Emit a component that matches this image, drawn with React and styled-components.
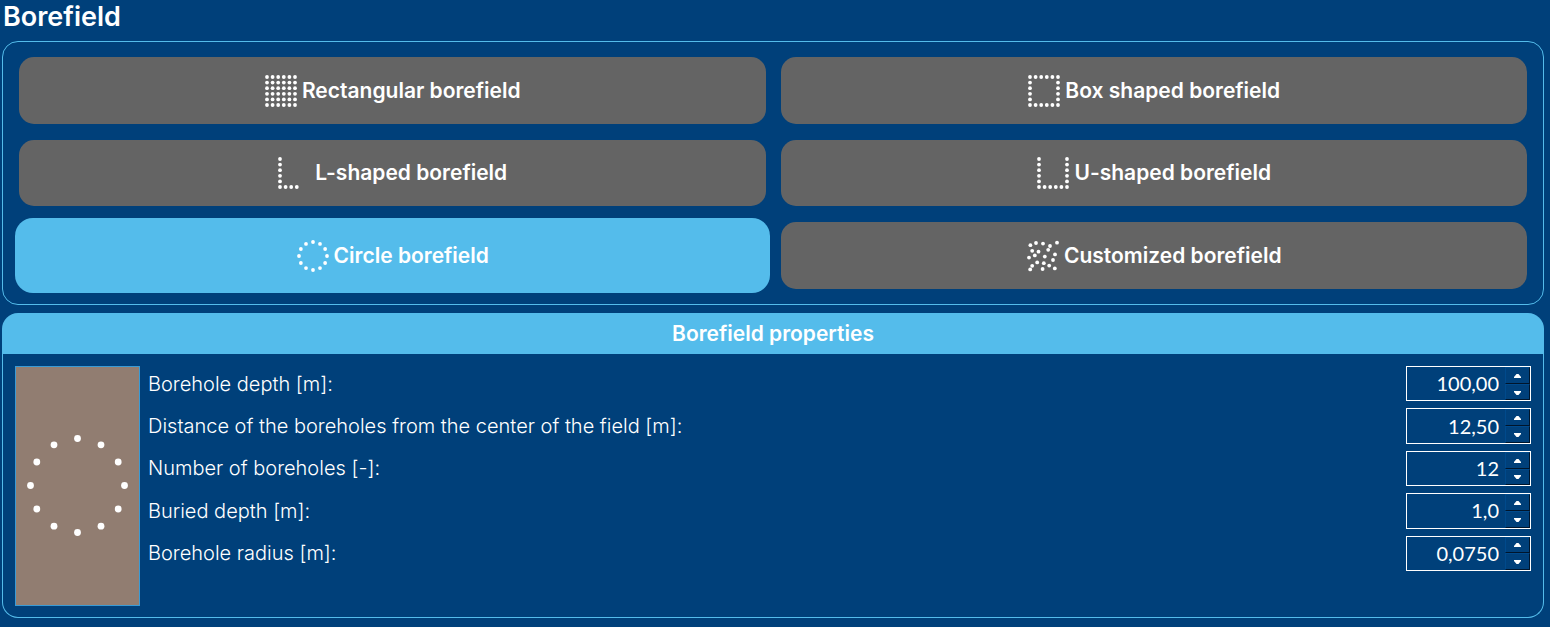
import React, { useState } from "react";
import styled, { createGlobalStyle } from "styled-components";

const colors = {
  background: "#00407a",
  accent: "#54bceb",
  button: "#646464",
  ground: "#917d71",
  shadow: "#00152b",
};

const GlobalStyle = createGlobalStyle`
  *, *::before, *::after { box-sizing: border-box; }
  body {
    margin: 0;
    background: ${colors.background};
    color: #fff;
    font-family: Inter, "Open Sans", sans-serif;
    font-size: 20px;
    font-weight: 350;
    line-height: 24px;
    font-variant-ligatures: none;
  }
  button, input { font: inherit; color: inherit; }
`;

const Page = styled.main`
  padding: 0 6px 9px 2px;
`;

const Title = styled.h1`
  margin: 0;
  padding: 1px 0 8px 1px;
  font-size: 27px;
  line-height: 32px;
  font-weight: 600;
`;

const ShapeFrame = styled.section`
  padding: 11px 12px;
  border: 1px solid ${colors.accent};
  border-radius: 16px;
`;

const ShapeGrid = styled.div`
  display: grid;
  grid-template-columns: 1fr 1fr;
  grid-auto-rows: 1fr;
  gap: 8px 7px;
  min-height: 240px;
`;

const ShapeButton = styled.button`
  display: flex;
  align-items: center;
  justify-content: center;
  gap: 4px;
  margin: ${(p) => (p.$active ? "0" : "4px")};
  padding: 1px 0 0;
  border: 0;
  border-radius: ${(p) => (p.$active ? "18px" : "15px")};
  background: ${(p) => (p.$active ? colors.accent : colors.button)};
  font-size: 21px;
  font-weight: 600;
  cursor: pointer;
`;

const Properties = styled.section`
  margin-top: 8px;
`;

const PropertiesTitle = styled.h2`
  margin: 0;
  padding: 9px 0 8px;
  border-radius: 16px 16px 0 0;
  background: ${colors.accent};
  font-size: 21px;
  line-height: 24px;
  font-weight: 600;
  text-align: center;
`;

const PropertiesBody = styled.div`
  display: flex;
  align-items: flex-start;
  gap: 8px;
  padding: 12px 12px 11px;
  border: 1px solid ${colors.accent};
  border-top: 0;
  border-radius: 0 0 16px 16px;
`;

const Preview = styled.svg`
  flex: none;
  width: 125px;
  height: 240px;
  border: 1px solid #3a9bd5;
  background: ${colors.ground};
`;

const Fields = styled.div`
  flex: 1;
  display: grid;
  grid-auto-rows: 1fr;
  gap: 7px;
  min-height: 205px;
`;

const Field = styled.div`
  display: flex;
  align-items: stretch;
  justify-content: space-between;
`;

const FieldLabel = styled.label`
  align-self: center;
`;

const SpinBox = styled.div`
  display: flex;
  width: 125px;
  border: 1px solid #fff;
`;

const SpinInput = styled.input`
  flex: 1;
  min-width: 0;
  padding: 0 6px 1px 0;
  border: 0;
  outline: 0;
  background: transparent;
  font-family: Lato, sans-serif;
  font-weight: 400;
  text-align: right;
`;

const SpinButtons = styled.div`
  display: flex;
  flex-direction: column;
  width: 25px;
`;

const SpinButton = styled.button`
  flex: 1;
  display: flex;
  align-items: center;
  justify-content: center;
  min-height: 0;
  padding: 1px 0 0;
  border: 1px solid ${colors.shadow};
  border-top-color: #004a8c;
  border-left-color: #004a8c;
  background: ${colors.background};
`;

const line = [0, 1, 2, 3, 4, 5];
const step = (i) => 3 + i * 5.6;

const grid = (keep) =>
  line.flatMap((row) =>
    line.filter((col) => keep(col, row)).map((col) => [step(col), step(row)])
  );

const ring = (cx, cy, radius, count) =>
  Array.from({ length: count }, (_, i) => {
    const angle = (i * 2 * Math.PI) / count;
    return [cx + radius * Math.cos(angle), cy + radius * Math.sin(angle)];
  });

const shapes = [
  { id: "rectangular", label: "Rectangular borefield", dots: grid(() => true) },
  {
    id: "box",
    label: "Box shaped borefield",
    dots: grid((c, r) => c === 0 || c === 5 || r === 0 || r === 5),
  },
  {
    id: "l",
    label: "L-shaped borefield",
    dots: grid((c, r) => c === 0 || (r === 5 && c < 4)),
  },
  {
    id: "u",
    label: "U-shaped borefield",
    dots: grid((c, r) => c === 0 || c === 5 || r === 5),
  },
  { id: "circle", label: "Circle borefield", dots: ring(17, 17, 14, 12) },
  {
    id: "custom",
    label: "Customized borefield",
    dots: [
      [4.4, 6.2], [10, 4], [17, 4.6], [24, 7], [31, 3.7],
      [6.2, 11.8], [12.5, 12.7], [22.2, 10.8], [8.8, 16.4], [3, 18.6],
      [18.8, 17.6], [29, 15.4], [27, 21], [11.2, 23.4], [17.8, 24.2],
      [23.2, 26.6], [6.2, 26.8], [4.2, 30.4], [16.6, 30], [28.8, 29.4],
    ],
  },
];

const fields = [
  { id: "depth", label: "Borehole depth [m]:", value: 100, digits: 2, step: 1 },
  {
    id: "distance",
    label: "Distance of the boreholes from the center of the field [m]:",
    value: 12.5,
    digits: 2,
    step: 0.1,
  },
  { id: "number", label: "Number of boreholes [-]:", value: 12, digits: 0, step: 1 },
  { id: "buried", label: "Buried depth [m]:", value: 1, digits: 1, step: 0.1 },
  { id: "radius", label: "Borehole radius [m]:", value: 0.075, digits: 4, step: 0.001 },
];

function Dots({ points, radius }) {
  return points.map(([x, y], i) => (
    <circle key={i} cx={x} cy={y} r={radius} fill="#fff" />
  ));
}

function Arrow({ down }) {
  return (
    <svg width="7" height="4" viewBox="0 0 7 4" aria-hidden="true">
      <path d={down ? "M0 0H7V1L4.5 4H2.5L0 1Z" : "M0 4H7V3L4.5 0H2.5L0 3Z"} fill="#fff" />
    </svg>
  );
}

function NumberField({ field }) {
  const format = (n) => n.toFixed(field.digits).replace(".", ",");
  const [text, setText] = useState(format(field.value));
  const change = (delta) =>
    setText(format((parseFloat(text.replace(",", ".")) || 0) + delta));
  return (
    <Field>
      <FieldLabel htmlFor={field.id}>{field.label}</FieldLabel>
      <SpinBox>
        <SpinInput
          id={field.id}
          inputMode="decimal"
          value={text}
          onChange={(e) => setText(e.target.value)}
        />
        <SpinButtons>
          <SpinButton type="button" aria-label="Increase" onClick={() => change(field.step)}>
            <Arrow />
          </SpinButton>
          <SpinButton type="button" aria-label="Decrease" onClick={() => change(-field.step)}>
            <Arrow down />
          </SpinButton>
        </SpinButtons>
      </SpinBox>
    </Field>
  );
}

export default function App() {
  const [active, setActive] = useState("circle");
  return (
    <Page>
      <GlobalStyle />
      <Title>Borefield</Title>
      <ShapeFrame>
        <ShapeGrid>
          {shapes.map((shape) => (
            <ShapeButton
              key={shape.id}
              type="button"
              $active={active === shape.id}
              aria-pressed={active === shape.id}
              onClick={() => setActive(shape.id)}
            >
              <svg width="34" height="34" viewBox="0 0 34 34" aria-hidden="true">
                <Dots points={shape.dots} radius={1.9} />
              </svg>
              {shape.label}
            </ShapeButton>
          ))}
        </ShapeGrid>
      </ShapeFrame>
      <Properties>
        <PropertiesTitle>Borefield properties</PropertiesTitle>
        <PropertiesBody>
          <Preview viewBox="0 0 123 238" aria-hidden="true">
            <Dots points={ring(61.5, 118.5, 47, 12)} radius={3.4} />
          </Preview>
          <Fields>
            {fields.map((field) => (
              <NumberField key={field.id} field={field} />
            ))}
          </Fields>
        </PropertiesBody>
      </Properties>
    </Page>
  );
}
